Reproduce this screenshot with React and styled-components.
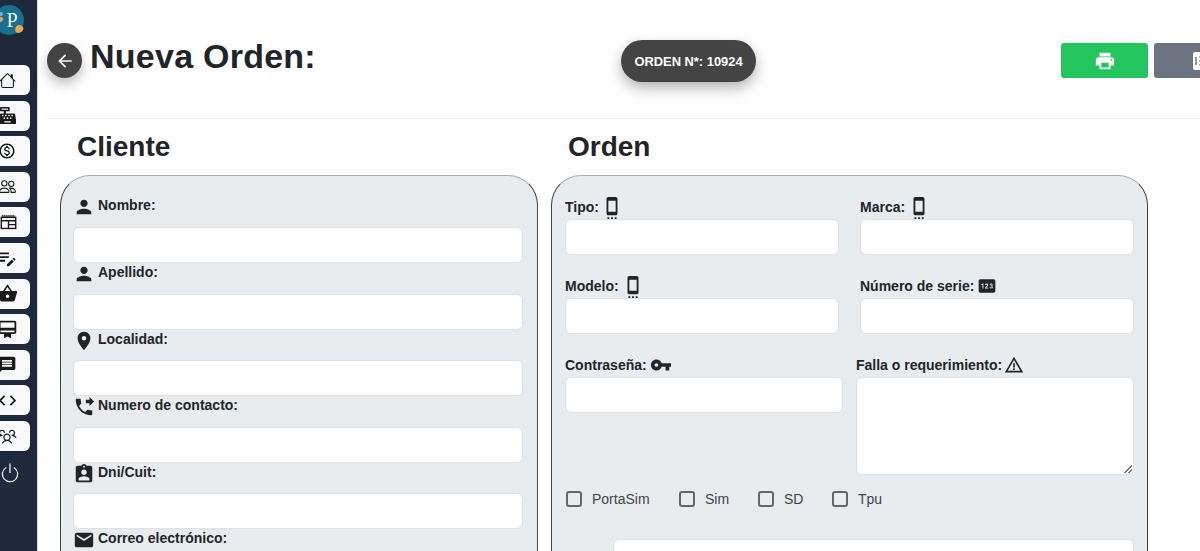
import React from 'react';
import styled, { createGlobalStyle } from 'styled-components';
import { BsHouse, BsPeople, BsPower } from 'react-icons/bs';
import { FaCashRegister } from 'react-icons/fa';
import { PiUsersThree } from 'react-icons/pi';
import {
    MdOutlineMonetizationOn, MdEditNote, MdShoppingBasket, MdOutlineCardMembership,
    MdMessage, MdCode, MdPerson, MdLocationOn, MdPhoneForwarded, MdPrint,
    MdAssignmentInd, MdEmail, MdSettingsCell, MdPin, MdVpnKey, MdWarningAmber, MdArrowBack,
} from 'react-icons/md';

const GlobalStyle = createGlobalStyle`
    html, body {
        margin: 0;
        height: 100%;
        overflow: hidden;
        background: #fff;
    }
    * {
        box-sizing: border-box;
    }
`;

const Page = styled.div`
    display: flex;
    width: 1200px;
    height: 551px;
    overflow: hidden;
    font-family: 'Liberation Sans', Arial, sans-serif;
    color: #212529;
`;

const Sidebar = styled.nav`
    flex: 0 0 38px;
    background: #1e293b;
    border-right: 1px solid #d5d8dc;
    display: flex;
    flex-direction: column;
    overflow: hidden;
`;

const LogoWrap = styled.div`
    height: 65px;
    margin-left: -7px;
    padding-top: 4px;
`;

const SideButton = styled.div`
    flex: 0 0 30px;
    width: 46px;
    margin: 0 0 5.6px -16px;
    padding-left: ${p => p.$shift || 0}px;
    background: #f8f9fa;
    border-radius: 6px;
    display: flex;
    align-items: center;
    justify-content: center;
    color: #1a1a1a;
    font-size: ${p => p.$size || 18}px;
`;

const PeopleIcon = styled(BsPeople)`
    transform: scaleX(-1);
`;

const PowerButton = styled.div`
    margin: 5px 0 0 -1px;
    width: 20px;
    color: #e5e7eb;
    font-size: 22px;
    line-height: 0;
`;

const Main = styled.main`
    flex: 0 0 1162px;
    overflow: hidden;
`;

const Header = styled.header`
    height: 119px;
    margin-left: 9px;
    padding-top: 36px;
    border-bottom: 1px solid #eceef0;
    display: flex;
    align-items: flex-start;
`;

const BackButton = styled.div`
    flex: 0 0 35px;
    height: 35px;
    margin-top: 7px;
    border-radius: 50%;
    background: #444;
    color: #f4f4f4;
    display: flex;
    align-items: center;
    justify-content: center;
    font-size: 20px;
    box-shadow: 0 6px 12px rgba(0, 0, 0, 0.25);
`;

const Title = styled.h1`
    flex: 0 0 531px;
    margin: 0 0 0 8px;
    font-size: 34px;
    line-height: 41px;
    font-weight: 700;
    letter-spacing: 0.25px;
`;

const OrderPill = styled.div`
    flex: 0 0 135px;
    height: 42px;
    margin-top: 4px;
    border-radius: 21px;
    background: #444;
    color: #fff;
    font-size: 12.900px;
    font-weight: 700;
    display: flex;
    align-items: center;
    justify-content: center;
    box-shadow: 0 6px 14px rgba(0, 0, 0, 0.3);
`;

const ActionGroup = styled.div`
    display: flex;
    gap: 6px;
    margin: 7px 0 0 305px;
`;

const ActionButton = styled.div`
    flex: 0 0 87px;
    width: 87px;
    height: 35px;
    padding-left: ${p => p.$shift || 0}px;
    border-radius: 3px;
    background: ${p => p.$color};
    color: #fff;
    display: flex;
    align-items: center;
    justify-content: center;
    font-size: 22px;
`;

const Columns = styled.div`
    display: flex;
    gap: 13px;
    margin-left: 22px;
`;

const Column = styled.section`
    flex: 0 0 ${p => p.$width}px;
`;

const SectionTitle = styled.h2`
    margin: 0;
    height: 56px;
    padding-left: 17px;
    font-size: 28px;
    line-height: 56px;
    font-weight: 700;
`;

const Panel = styled.div`
    height: 500px;
    background: #e9ecef;
    border: 1px solid #3f4448;
    border-top-color: #a9adb1;
    border-radius: 30px 30px 0 0;
    padding: ${p => p.$padding};
`;

const ClientField = styled.div`
    height: 66.67px;
`;

const ClientLabel = styled.label`
    height: 30.67px;
    display: flex;
    align-items: flex-start;
    gap: 3px;
    font-size: 14px;
    font-weight: 700;
    line-height: 19px;

    svg {
        flex: 0 0 22px;
        font-size: 22px;
    }
`;

const Input = styled.div`
    height: 36px;
    background: #fff;
    border: 1px solid #dee2e6;
    border-radius: 6px;
`;

const Row = styled.div`
    display: flex;
    justify-content: space-between;
    margin-bottom: ${p => p.$gap || 0}px;
`;

const OrderField = styled.div`
    flex: 0 0 ${p => p.$width}px;
`;

const OrderLabel = styled.label`
    height: 24px;
    display: flex;
    align-items: center;
    font-size: 14px;
    font-weight: 700;
    white-space: nowrap;

    svg {
        font-size: ${p => p.$icon || 20}px;
        margin-left: ${p => p.$iconGap ?? 4}px;
        margin-top: ${p => p.$iconDrop || 0}px;
        overflow: visible;
    }
`;

const TextArea = styled(Input)`
    height: 98px;
    position: relative;

    &::after {
        content: '';
        position: absolute;
        right: 1px;
        bottom: 1px;
        width: 8px;
        height: 8px;
        background: linear-gradient(135deg, transparent 50%, #777 50%, #777 60%, transparent 60%, transparent 75%, #777 75%, #777 85%, transparent 85%);
    }
`;

const CheckRow = styled.div`
    display: flex;
    margin: 16px 0 32px 1px;
    height: 16px;
`;

const CheckItem = styled.label`
    display: flex;
    align-items: center;
    width: ${p => p.$width}px;
    font-size: 14px;
    color: #3f4448;
`;

const CheckBox = styled.span`
    flex: 0 0 16px;
    height: 16px;
    margin-right: 10px;
    border: 2px solid #666;
    border-radius: 3px;
    background: #e9ecef;
`;

const WideInput = styled(Input)`
    margin-left: 48px;
`;

function Logo() {
    return (
        <svg width="34" height="34" viewBox="0 0 34 34">
            <circle cx="16" cy="16" r="15" fill="#17708f"/>
            <path d="M4 9c3-2 6-1 6 1s-4 3-6 2z" fill="#6db4cf"/>
            <path d="M6 13c3-1 5 1 4 3s-3 3-5 1z" fill="#e6a24b"/>
            <path d="M23 23c2-3 5-2 6-1s2 2 1 4-3 3-5 3-4-3-2-6z" fill="#e8a94f"/>
            <text x="19" y="23" fontFamily="'Liberation Serif', serif" fontSize="20" fill="#f2f5f7" textAnchor="middle">P</text>
        </svg>
    );
}

function TableIcon() {
    return (
        <svg width="17" height="17" viewBox="0 0 20 20" fill="none" stroke="#1a1a1a">
            <path d="M2 2.500h16M3 1v2M5.500 1v2M8 1v2M10.500 1v2M13 1v2M15.500 1v2" strokeWidth="1"/>
            <rect x="1.500" y="4" width="17" height="13" strokeWidth="1.600" fill="none"/>
            <path d="M1.500 8h17M10 8v9M10 12.500h8.500" strokeWidth="1.600"/>
        </svg>
    );
}

function TicketIcon() {
    return (
        <svg width="20" height="20" viewBox="0 0 20 20">
            <rect x="1" y="1" width="18" height="18" rx="2" fill="#fff"/>
            <path d="M4 6v8" stroke="#6b7280" strokeWidth="1.500"/>
            <path d="M7 6h9M7 10h9M7 14h9" stroke="#9ca3af" strokeWidth="1.500"/>
        </svg>
    );
}

const sideItems = [
    { icon: <BsHouse/>, size: 17 },
    { icon: <FaCashRegister/>, size: 17 },
    { icon: <MdOutlineMonetizationOn/>, size: 18 },
    { icon: <PeopleIcon/>, size: 17 },
    { icon: <TableIcon/>, shift: 2 },
    { icon: <MdEditNote/>, size: 22 },
    { icon: <MdShoppingBasket/>, size: 21 },
    { icon: <MdOutlineCardMembership/>, size: 21 },
    { icon: <MdMessage/>, size: 20 },
    { icon: <MdCode/>, size: 21 },
    { icon: <PiUsersThree/>, size: 20 },
];

const clientFields = [
    { label: 'Nombre:', icon: <MdPerson/> },
    { label: 'Apellido:', icon: <MdPerson/> },
    { label: 'Localidad:', icon: <MdLocationOn/> },
    { label: 'Numero de contacto:', icon: <MdPhoneForwarded/> },
    { label: 'Dni/Cuit:', icon: <MdAssignmentInd/> },
    { label: 'Correo electrónico:', icon: <MdEmail/> },
];

export default function App() {
    return (
        <Page>
            <GlobalStyle/>
            <Sidebar>
                <LogoWrap><Logo/></LogoWrap>
                {sideItems.map((item, i) => (
                    <SideButton key={i} $size={item.size} $shift={item.shift}>{item.icon}</SideButton>
                ))}
                <PowerButton><BsPower/></PowerButton>
            </Sidebar>
            <Main>
                <Header>
                    <BackButton><MdArrowBack/></BackButton>
                    <Title>Nueva Orden:</Title>
                    <OrderPill>ORDEN N*: 10924</OrderPill>
                    <ActionGroup>
                        <ActionButton $color="#22c55e"><MdPrint/></ActionButton>
                        <ActionButton $color="#6b7280" $shift={8}><TicketIcon/></ActionButton>
                    </ActionGroup>
                </Header>
                <Columns>
                    <Column $width={478}>
                        <SectionTitle>Cliente</SectionTitle>
                        <Panel $padding="20.200px 14px 0 12px">
                            {clientFields.map(field => (
                                <ClientField key={field.label}>
                                    <ClientLabel>{field.icon}{field.label}</ClientLabel>
                                    <Input/>
                                </ClientField>
                            ))}
                        </Panel>
                    </Column>
                    <Column $width={597}>
                        <SectionTitle>Orden</SectionTitle>
                        <Panel $padding="19px 13px 0 13px">
                            <Row $gap={19}>
                                <OrderField $width={274}>
                                    <OrderLabel $icon={22} $iconGap={2} $iconDrop={2}>Tipo:<MdSettingsCell/></OrderLabel>
                                    <Input/>
                                </OrderField>
                                <OrderField $width={274}>
                                    <OrderLabel $icon={22} $iconGap={3} $iconDrop={2}>Marca:<MdSettingsCell/></OrderLabel>
                                    <Input/>
                                </OrderField>
                            </Row>
                            <Row $gap={19}>
                                <OrderField $width={274}>
                                    <OrderLabel $icon={22} $iconGap={3} $iconDrop={2}>Modelo:<MdSettingsCell/></OrderLabel>
                                    <Input/>
                                </OrderField>
                                <OrderField $width={274}>
                                    <OrderLabel $icon={20} $iconGap={3}>Número de serie:<MdPin/></OrderLabel>
                                    <Input/>
                                </OrderField>
                            </Row>
                            <Row>
                                <OrderField $width={278}>
                                    <OrderLabel $icon={22} $iconGap={3}>Contraseña:<MdVpnKey/></OrderLabel>
                                    <Input/>
                                </OrderField>
                                <OrderField $width={278}>
                                    <OrderLabel $icon={20} $iconGap={2}>Falla o requerimiento:<MdWarningAmber/></OrderLabel>
                                    <TextArea/>
                                </OrderField>
                            </Row>
                            <CheckRow>
                                <CheckItem $width={113}><CheckBox/>PortaSim</CheckItem>
                                <CheckItem $width={79}><CheckBox/>Sim</CheckItem>
                                <CheckItem $width={74}><CheckBox/>SD</CheckItem>
                                <CheckItem $width={74}><CheckBox/>Tpu</CheckItem>
                            </CheckRow>
                            <WideInput/>
                        </Panel>
                    </Column>
                </Columns>
            </Main>
        </Page>
    );
}
